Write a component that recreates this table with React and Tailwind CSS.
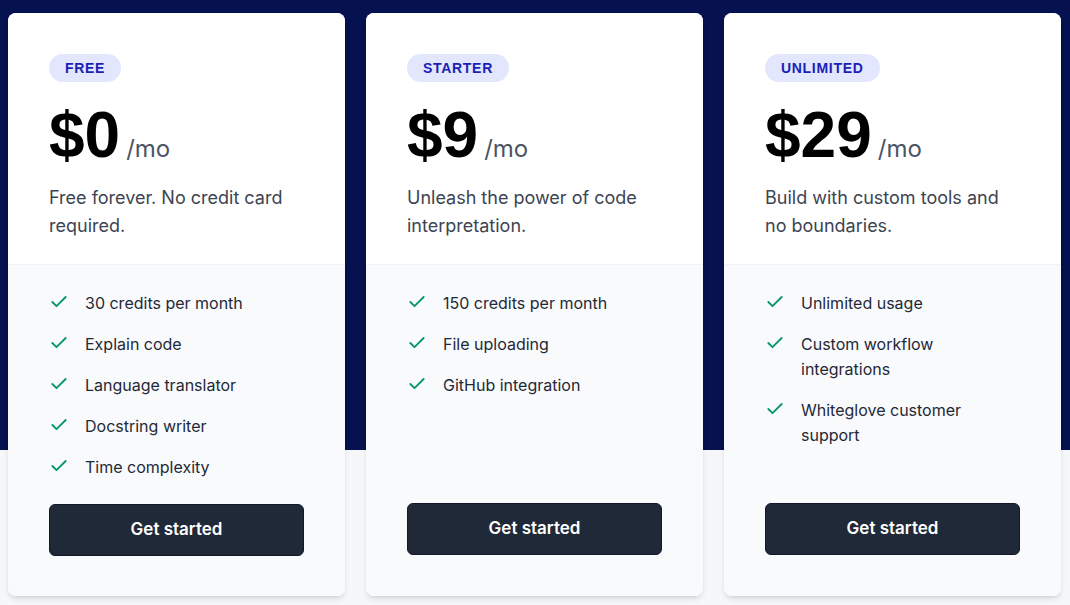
import { Check } from "lucide-react";

const plans = [
  {
    name: "Free",
    price: "$0",
    blurb: "Free forever. No credit card required.",
    features: [
      "30 credits per month",
      "Explain code",
      "Language translator",
      "Docstring writer",
      "Time complexity",
    ],
  },
  {
    name: "Starter",
    price: "$9",
    blurb: "Unleash the power of code interpretation.",
    features: ["150 credits per month", "File uploading", "GitHub integration"],
  },
  {
    name: "Unlimited",
    price: "$29",
    blurb: "Build with custom tools and no boundaries.",
    features: [
      "Unlimited usage",
      "Custom workflow integrations",
      "Whiteglove customer support",
    ],
  },
];

const PlanCard = ({ plan }) => {
  return (
    <div className="flex flex-col rounded-lg bg-white shadow-md overflow-hidden">
      {/* top */}
      <div className="px-[41px] pt-[41px] pb-6 bg-white">
        <span className="inline-flex items-center h-7 px-4 rounded-full bg-[#e2e7fd] text-[#1a1fb5] text-[14px] font-bold uppercase tracking-wider font-['Liberation_Sans',sans-serif]">
          {plan.name}
        </span>
        <div className="mt-[21px] flex items-baseline">
          <span className="text-[64px] leading-none font-bold text-black font-['Liberation_Sans',sans-serif]">
            {plan.price}
          </span>
          <span className="ml-[6px] text-2xl text-[#4b5563]">/mo</span>
        </div>
        <p className="mt-[17px] text-lg leading-7 text-[#3d4451] pr-2">{plan.blurb}</p>
      </div>
      {/* bottom */}
      <div className="flex-1 flex flex-col justify-between px-[41px] pt-[26px] pb-[41px] bg-[#f9fafb] border-t border-[#f1f2f5]">
        <ul className="flex flex-col gap-4">
          {plan.features.map((f) => (
            <li key={f} className="flex items-start gap-4 text-base leading-[25px] text-[#1f2937]">
              <Check className="w-5 h-5 mt-[1px] shrink-0 text-[#059669]" strokeWidth={2.2} />
              <span className="pr-8">{f}</span>
            </li>
          ))}
        </ul>
        <button className="mt-6 h-[52px] w-full rounded-md bg-[#1f2937] border border-[#111827] text-white text-[17px] font-semibold">
          Get started
        </button>
      </div>
    </div>
  );
};

export default function App() {
  return (
    <div className="h-[605px] w-full bg-[linear-gradient(to_bottom,#06114f_450px,#f6f7f9_450px)] pt-[13px] pl-2 pr-[9px] pb-[9px] font-['Inter',sans-serif]">
      <div className="grid grid-cols-3 gap-[21px] h-full">
        {plans.map((p) => (
          <PlanCard key={p.name} plan={p} />
        ))}
      </div>
    </div>
  );
}
